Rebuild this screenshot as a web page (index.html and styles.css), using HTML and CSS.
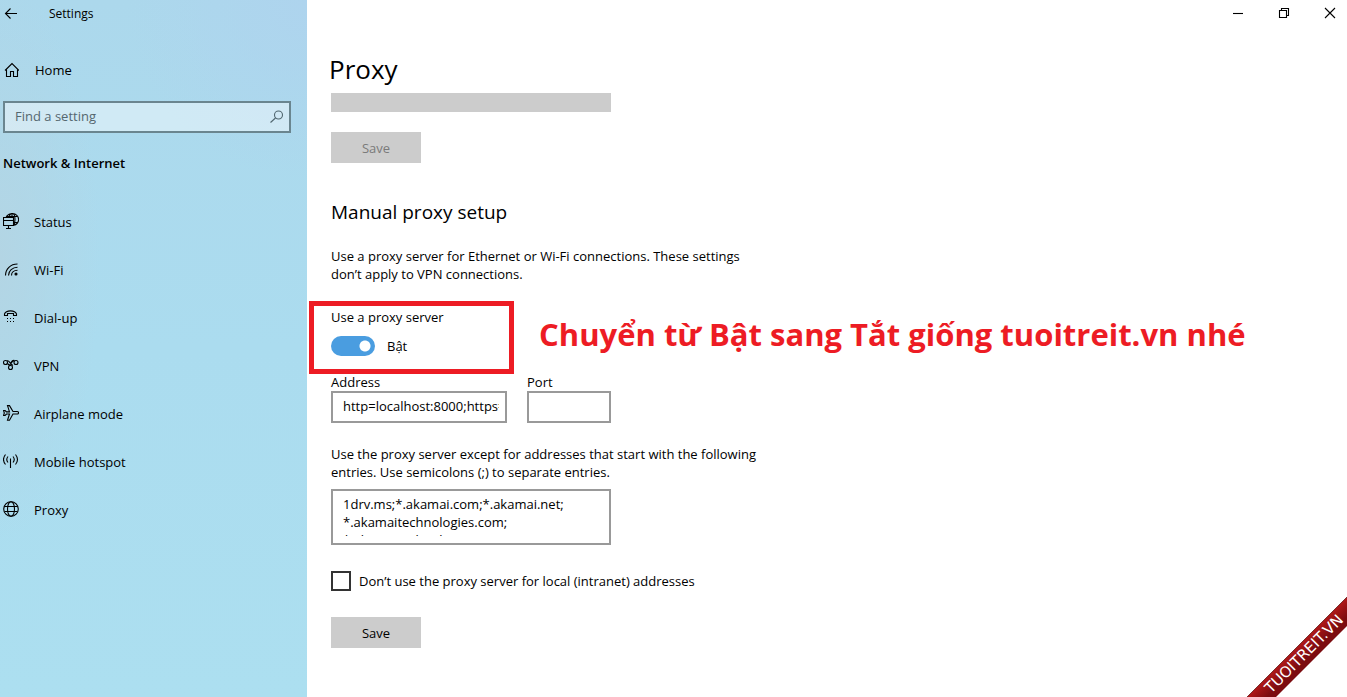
FILE: index.html
```html
<!DOCTYPE html>
<html lang="en">
<head>
<meta charset="utf-8">
<title>Settings</title>
<link rel="stylesheet" href="styles.css">
</head>
<body>
<div class="app">
  <aside class="sidebar">
    <header class="titlebar">
      <button class="back" aria-label="Back"><svg class="icon" viewBox="0 0 16 16"><path d="M14 7.500H2.500M7.500 2.500l-5 5 5 5"/></svg></button>
      <span>Settings</span>
    </header>
    <a class="nav-link home" href="#home"><svg class="icon" viewBox="0 0 16 16"><path d="M2 8.500 9 1.500l7 7M3.500 7v7.500h4v-5h3v5h4V7"/></svg>Home</a>
    <form class="search">
      <input type="search" aria-label="Find a setting" placeholder="Find a setting">
      <svg class="icon" viewBox="0 0 16 16"><circle cx="9.500" cy="6" r="4"/><path d="M6.500 9 1.500 13.500"/></svg>
    </form>
    <h2 class="category">Network &amp; Internet</h2>
    <nav class="nav">
      <a class="nav-link" href="#status"><svg class="icon" viewBox="0 0 16 16"><path d="M3 4.500A6.500 6 0 1 1 11 12.300M4 3.500h10M11 9.500h3.500M6 4.500C6.500 2 7.500.5 9 .5s3 2 3 6c0 2.500-.5 4.500-1.500 6M9 .5v4M.5 4.500h10v8H.5zM.5 7.500h10M5.500 12.500v3M3 15.500h5"/></svg>Status</a>
      <a class="nav-link" href="#wifi"><svg class="icon" viewBox="0 0 16 16"><path d="M2.500 14.500C2.500 8 7.500 3 14.500 3M5.500 14.500c0-4.500 4-8.200 9-8.200M8.500 14.500c0-3 2.500-5.200 6-5.200"/><circle class="dot" cx="13" cy="13" r="1"/></svg>Wi-Fi</a>
      <a class="nav-link" href="#dialup"><svg class="icon" viewBox="0 0 16 16"><path d="M1.500 6.500V5C3 .8 12 .8 13.500 5v1.500h-3v-2h-6v2z"/><path d="M4 9.500h1m2 0h1m2 0h1M4 12.500h1m2 0h1m2 0h1"/></svg>Dial-up</a>
      <a class="nav-link" href="#vpn"><svg class="icon" viewBox="0 0 16 16"><circle cx="2.500" cy="5.500" r="2"/><circle cx="13" cy="5.500" r="2"/><circle cx="7.500" cy="10.500" r="2"/><path d="M4 4c2-1.500 3 3 6 4.500M11.500 4c-2-1-3.500 2-5 4.500M4.500 6.500 6.500 8.500M8 5.500q1.500-2.500 3.500-2"/></svg>VPN</a>
      <a class="nav-link" href="#airplane"><svg class="icon" viewBox="0 0 16 16"><path d="M.6 5.500h1.500l1.400 1.400H6.500L4.500.6h2L10 6.500h4q1.600 0 1.600 1.300T14 9h-4l-3.500 6.300h-2l2-6.300h-3L2.100 10.500H.6L1.300 8z"/></svg>Airplane mode</a>
      <a class="nav-link" href="#hotspot"><svg class="icon" viewBox="0 0 16 16"><path d="M2.500 1.500q-4 5 0 10M5 3.500q-2.500 3 0 6M12.500 1.500q4 5 0 10M10 3.500q2.500 3 0 6M7.500 5.500v9.500"/></svg>Mobile hotspot</a>
      <a class="nav-link" href="#proxy"><svg class="icon" viewBox="0 0 16 16"><circle cx="8" cy="8" r="7.300"/><ellipse cx="8" cy="8" rx="3.500" ry="7.300"/><path d="M1.500 5.500h13M1.500 10.500h13"/></svg>Proxy</a>
    </nav>
  </aside>
  <main class="main">
    <div class="window-controls">
      <button aria-label="Minimize"><svg class="icon" viewBox="0 0 16 16"><path d="M3 7.500h10"/></svg></button>
      <button aria-label="Restore"><svg class="icon" viewBox="0 0 16 16"><path d="M3.500 4.500h7v7h-7zM5.500 4.500v-2h7v7h-2"/></svg></button>
      <button aria-label="Close"><svg class="icon" viewBox="0 0 16 16"><path d="m3 2 10 10M13 2 3 12"/></svg></button>
    </div>
    <div class="content">
      <h1>Proxy</h1>
      <input class="script-address" type="text" aria-label="Script address" disabled>
      <button class="save" disabled>Save</button>
      <h2 class="section-title">Manual proxy setup</h2>
      <p class="intro">Use a proxy server for Ethernet or Wi-Fi connections. These settings don’t apply to VPN connections.</p>
      <div class="proxy-toggle">
        <label for="use-proxy">Use a proxy server</label>
        <div class="switch-row"><input class="switch" id="use-proxy" type="checkbox" role="switch" checked><span>Bật</span></div>
        <strong class="note">Chuyển từ Bật sang Tắt giống tuoitreit.vn nhé</strong>
      </div>
      <div class="fields">
        <div class="field address"><label for="address">Address</label><input id="address" type="text" value="http=localhost:8000;https=localhost:8000"></div>
        <div class="field port"><label for="port">Port</label><input id="port" type="text"></div>
      </div>
      <label class="exceptions-label" for="exceptions">Use the proxy server except for addresses that start with the following entries. Use semicolons (;) to separate entries.</label>
      <div class="exceptions"><textarea id="exceptions">1drv.ms;*.akamai.com;*.akamai.net;
*.akamaitechnologies.com;
*.akamaitechnologies.net</textarea></div>
      <label class="local"><input type="checkbox">Don’t use the proxy server for local (intranet) addresses</label>
      <button class="save">Save</button>
    </div>
  </main>
  <svg class="ribbon" viewBox="0 0 100 100" role="img" aria-label="TUOITREIT.VN">
    <defs><linearGradient id="red" x1="0" y1="0" x2="1" y2="1"><stop offset=".5" stop-color="#b01818"/><stop offset=".6" stop-color="#7c0c10"/></linearGradient></defs>
    <path fill="url(#red)" d="M0 100 100 0v29L29 100z"/><path d="M0 100 100 0" stroke="#7a3030" fill="none"/>
    <text class="ribbon-text" transform="translate(24 97) rotate(-45)">TUOITREIT.VN</text>
  </svg>
</div>
</body>
</html>
```
FILE: styles.css
```css
* { box-sizing: border-box; }
body { margin: 0; background: #fff; color: #000; font: 13px/18px "Open Sans", "Noto Sans", sans-serif; }
h1, h2, p { margin: 0; font-weight: 400; }
button, input, textarea { font: inherit; color: inherit; margin: 0; border-radius: 0; }
button { border: 0; padding: 0; background: transparent; }
.app { position: relative; display: grid; grid-template-columns: 307px 1fr; min-height: 100vh; overflow: hidden; }
.icon { width: 16px; height: 16px; flex: none; fill: none; stroke: #000; stroke-width: 1.1; display: block; }
.dot { fill: #000; }

.sidebar {
  padding: 0 16px 0 3px;
  background:
    radial-gradient(circle at 100% 0, #aed4ee 0, #aed4ee00 180px),
    radial-gradient(ellipse 100px 280px at 0 260px, #b3d5e4, #b3d5e400),
    linear-gradient(#acd8ec, #abdcef 50%, #acdff0);
}
.titlebar { display: flex; align-items: center; gap: 30px; height: 27px; font-size: 12px; }
.nav-link { display: flex; align-items: center; gap: 15px; height: 48px; color: #000; text-decoration: none; }
.nav .icon { margin-bottom: 2px; }
.home { margin-top: 19px; gap: 16px; }
.search { position: relative; margin: 7px 0 0; }
.search input { display: block; width: 100%; height: 32px; padding: 0 32px 2px 10px; border: 2px solid #6a858f; background: #ffffff70; outline: 0; }
.search input::placeholder { color: #55676f; opacity: 1; }
.search .icon { position: absolute; right: 6px; top: 8px; stroke: #50666f; }
.category { margin-top: 21px; font-size: 13px; font-weight: 600; }
.nav { margin-top: 26px; }

.window-controls { display: flex; justify-content: flex-end; gap: 12px; height: 27px; }
.window-controls button { width: 34px; display: grid; place-items: center; }
.content { padding: 24px 24px 32px; }
h1 { font-size: 26px; line-height: 36px; margin-left: -2px; }
.script-address { display: block; width: 280px; height: 19px; margin-top: 6px; border: 0; background: #ccc; }
.save { display: block; width: 90px; height: 31px; background: #ccc; }
.save:disabled { margin-top: 20px; color: #7a7a7a; }
.section-title { margin-top: 35px; font-size: 19px; line-height: 28px; }
.intro { max-width: 440px; margin-top: 21px; }
.proxy-toggle { position: relative; width: 205px; margin: 18px 0 0 -22px; height: 73px; padding: 2px 17px; border: 5px solid #ed1c24; }
.proxy-toggle label { display: block; }
.switch-row { display: flex; align-items: center; gap: 12px; margin-top: 10px; }
.switch { appearance: none; width: 44px; height: 20px; border-radius: 10px; background: radial-gradient(circle at 34px 10px, #fff 5px, #4a9de0 6px); }
.note { position: absolute; left: 225px; top: 5px; color: #ed1c24; font-size: 31px; line-height: 46px; white-space: nowrap; }
.fields { display: flex; gap: 20px; }
.field label { display: block; line-height: 17px; }
.field input { display: block; width: 100%; height: 32px; padding: 0 6px 2px 10px; border: 2px solid #999; }
.address { width: 176px; }
.port { width: 84px; }
.exceptions-label { display: block; max-width: 440px; margin-top: 22px; }
.exceptions { width: 280px; height: 56px; margin-top: 8px; padding: 4px 4px 6px 10px; border: 2px solid #999; }
.exceptions textarea { display: block; width: 100%; height: 41px; padding: 0; border: 0; resize: none; overflow: hidden; white-space: pre; }
.local { display: flex; align-items: center; gap: 8px; margin: 26px 0; }
.local input { appearance: none; width: 20px; height: 20px; border: 2px solid #333; background: #fff; }
.ribbon { position: absolute; right: 0; bottom: 0; width: 100px; height: 100px; }
.ribbon-text { fill: #fff; font: 15px "DejaVu Sans", sans-serif; }
```
